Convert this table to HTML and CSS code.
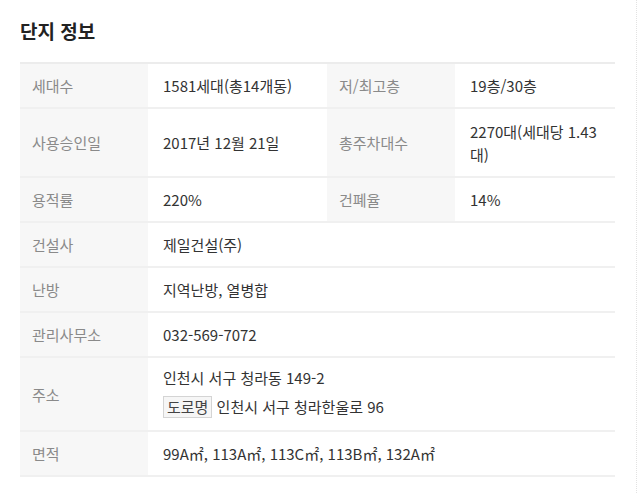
FILE: index.html
```html
<!DOCTYPE html>
<html lang="ko">
<head>
<meta charset="utf-8">
<title>단지 정보</title>
<link rel="stylesheet" href="styles.css">
</head>
<body>
<div class="page">
  <h2 class="title">단지 정보</h2>
  <table class="info">
    <colgroup>
      <col class="c-label"><col class="c-val1"><col class="c-label"><col class="c-val2">
    </colgroup>
    <tr>
      <th>세대수</th><td>1581세대(총14개동)</td>
      <th>저/최고층</th><td>19층/30층</td>
    </tr>
    <tr>
      <th>사용승인일</th><td>2017년 12월 21일</td>
      <th>총주차대수</th><td class="wrap">2270대(세대당 1.43대)</td>
    </tr>
    <tr>
      <th>용적률</th><td>220%</td>
      <th>건폐율</th><td>14%</td>
    </tr>
    <tr>
      <th>건설사</th><td colspan="3">제일건설(주)</td>
    </tr>
    <tr>
      <th>난방</th><td colspan="3">지역난방, 열병합</td>
    </tr>
    <tr>
      <th>관리사무소</th><td colspan="3">032-569-7072</td>
    </tr>
    <tr>
      <th>주소</th>
      <td colspan="3" class="addr-cell">
        <div class="addr">인천시 서구 청라동 149-2</div>
        <div class="addr road"><span class="badge">도로명</span> 인천시 서구 청라한울로 96</div>
      </td>
    </tr>
    <tr>
      <th>면적</th><td colspan="3">99A㎡, 113A㎡, 113C㎡, 113B㎡, 132A㎡</td>
    </tr>
  </table>
</div>
</body>
</html>
```
FILE: styles.css
```css
html, body {
  margin: 0;
  padding: 0;
  background: #fff;
}
body {
  font-family: "Noto Sans CJK KR", "Noto Sans", "Liberation Sans", sans-serif;
  color: #333;
}
.page {
  width: 616px;
  height: 493px;
  padding: 0 0 0 20px;
  border-right: 1px dotted #e2e2e2;
  box-sizing: content-box;
}
.title {
  margin: 0;
  padding-top: 18px;
  height: 62px;
  box-sizing: border-box;
  font-size: 19px;
  line-height: 26px;
  font-weight: 700;
  color: #222;
}
.info {
  width: 595px;
  border-collapse: collapse;
  table-layout: fixed;
  font-size: 15px;
  line-height: 22px;
  border-top: 2px solid #ececec;
}
.c-label { width: 128px; }
.c-val1 { width: 179px; }
.c-val2 { width: 160px; }
.info th, .info td {
  padding: 11px 8px 10px 15px;
  border-bottom: 2px solid #f0f0f0;
  text-align: left;
  vertical-align: middle;
}
.info th {
  background: #f7f7f7;
  color: #8a8a8a;
  font-weight: 400;
  padding-left: 12px;
}
.info td {
  color: #333;
}
.info td.wrap {
  line-height: 23px;
}
.info td.addr-cell {
  padding-top: 9px;
  padding-bottom: 12px;
}
.addr.road {
  margin-top: 7px;
}
.badge {
  display: inline-block;
  border: 1px solid #d4d4d4;
  background: #f6f6f6;
  padding: 0 3px;
  line-height: 20px;
  color: #444;
}
```
